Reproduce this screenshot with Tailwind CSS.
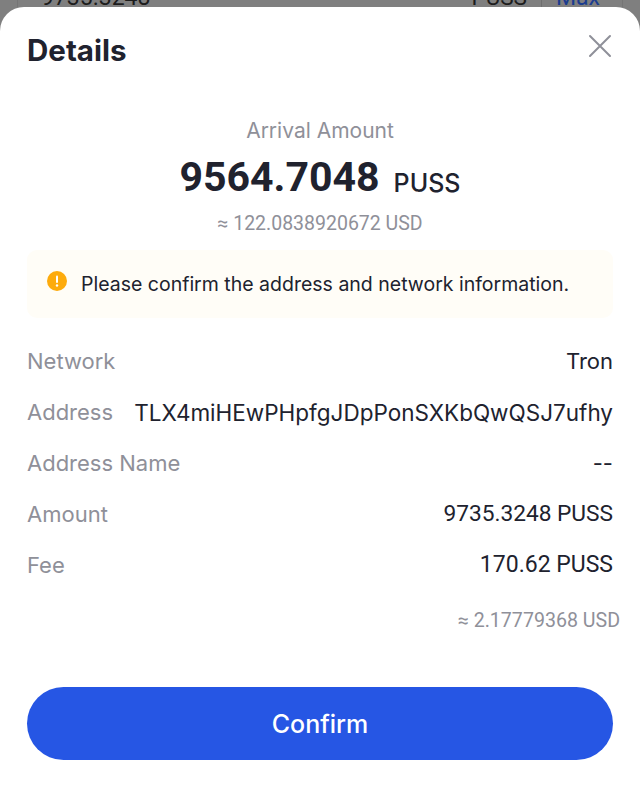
<!DOCTYPE html>
<html lang="en">
<head>
<meta charset="UTF-8">
<script src="https://cdn.jsdelivr.net/npm/@tailwindcss/browser@4"></script>
<title>Details</title>
</head>
<body class="bg-[#7f7f7f] font-['Inter',sans-serif]">
<div class="w-[640px] h-[800px] overflow-hidden flex flex-col">
  <!-- page behind the sheet -->
  <div class="h-[7px] overflow-hidden border-x border-[#757575] mx-[17px] shrink-0">
    <div class="flex items-center h-[24px] -mt-[15px] text-[23px] font-['Roboto',sans-serif] text-[#1c1c1c] leading-none pl-[23px] pr-[22px]">
      <span class="flex-1">9735.3248</span>
      <span class="text-[22.5px]">PUSS</span>
      <span class="w-px h-[24px] bg-[#6e6e6e] mx-[14px]"></span>
      <span class="text-[#1b3c8f]">Max</span>
    </div>
  </div>
  <!-- sheet -->
  <div class="flex-1 bg-white rounded-t-[24px] flex flex-col px-[27px]">
    <div class="flex items-center justify-between h-[86px] shrink-0">
      <h2 class="text-[29.5px] font-bold text-[#20222e]">Details</h2>
      <svg class="w-[24px] h-[24px] mr-[1px] mb-[8px]" viewBox="0 0 24 24" fill="none" stroke="#8f9099" stroke-width="2" stroke-linecap="round"><path d="M2 2 22 22M22 2 2 22"/></svg>
    </div>
    <div class="flex flex-col items-center mt-[24px] shrink-0">
      <p class="text-[21px] leading-[28px] text-[#8f9099]">Arrival Amount</p>
      <p class="flex items-baseline mt-[5px] text-[#20222e] leading-[54px]">
        <span class="text-[41px] font-bold font-['Roboto',sans-serif]">9564.7048</span>
        <span class="text-[25px] font-medium ml-[14px] relative top-px">PUSS</span>
      </p>
      <p class="text-[19.5px] leading-[28px] mt-px text-[#8f9099] font-['Roboto',sans-serif]">≈ 122.0838920672 USD</p>
    </div>
    <div class="flex items-center h-[68px] mt-[12px] pl-[20px] bg-[#fffdf7] rounded-[10px] shrink-0">
      <svg class="w-[20px] h-[20px] mb-[6px] shrink-0" viewBox="0 0 20 20"><circle cx="10" cy="10" r="10" fill="#fdab0d"/><rect x="9" y="4.5" width="2" height="7.5" rx="1" fill="#fff"/><circle cx="10" cy="14.5" r="1.2" fill="#fff"/></svg>
      <p class="ml-[14px] pt-[2px] text-[19.5px] text-[#20222e] whitespace-nowrap">Please confirm the address and network information.</p>
    </div>
    <dl class="mt-[18px] text-[22px] shrink-0">
      <div class="flex justify-between items-center h-[51px]"><dt class="text-[#8f9099]">Network</dt><dd class="text-[#20222e]">Tron</dd></div>
      <div class="flex justify-between items-center h-[51px]"><dt class="text-[#8f9099]">Address</dt><dd class="text-[#20222e] text-[22.5px]">TLX4miHEwPHpfgJDpPonSXKbQwQSJ7ufhy</dd></div>
      <div class="flex justify-between items-center h-[51px]"><dt class="text-[#8f9099]">Address Name</dt><dd class="text-[#20222e]">--</dd></div>
      <div class="flex justify-between items-center h-[51px]"><dt class="text-[#8f9099]">Amount</dt><dd class="text-[#20222e] font-['Roboto',sans-serif] text-[22.7px]">9735.3248 PUSS</dd></div>
      <div class="flex justify-between items-center h-[51px]"><dt class="text-[#8f9099]">Fee</dt><dd class="text-[#20222e] font-['Roboto',sans-serif] text-[23px]">170.62 PUSS</dd></div>
    </dl>
    <p class="text-right -mr-[7px] mt-[16px] text-[19.6px] leading-[28px] text-[#8f9099] shrink-0 font-['Roboto',sans-serif]">≈ 2.17779368 USD</p>
    <button class="mt-[52px] h-[73px] pt-[2px] rounded-full bg-[#2656e4] text-white text-[25px] font-medium shrink-0">Confirm</button>
  </div>
</div>
</body>
</html>
